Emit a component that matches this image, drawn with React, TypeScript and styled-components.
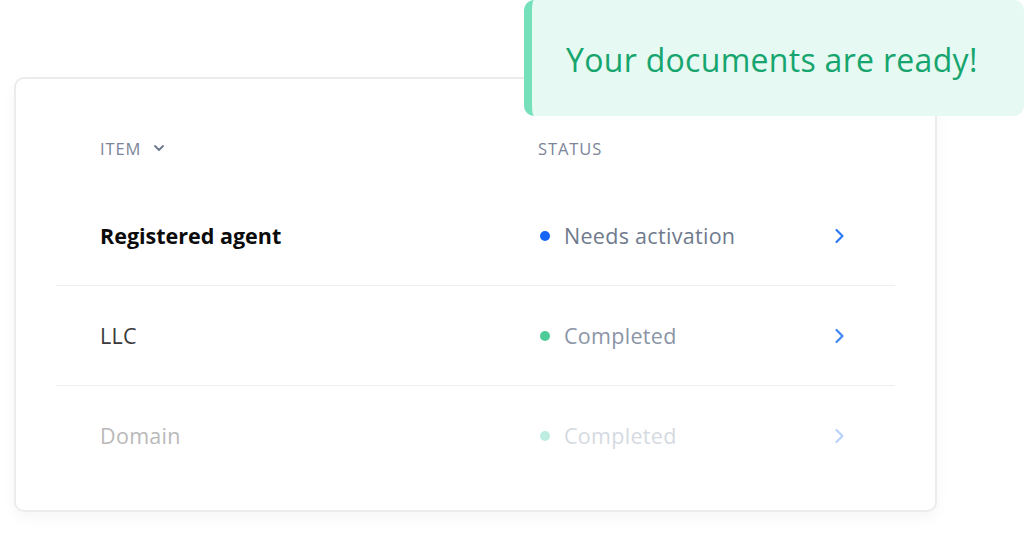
import React from 'react';
import styled, { createGlobalStyle } from 'styled-components';

const GlobalStyle = createGlobalStyle`
  html, body {
    margin: 0;
    padding: 0;
    background: #ffffff;
  }
  body {
    font-family: "Open Sans", Lato, "Liberation Sans", sans-serif;
    -webkit-font-smoothing: antialiased;
  }
`;

const Page = styled.div`
  position: relative;
  width: 1024px;
  height: 536px;
  padding: 77px 0 0 14px;
  box-sizing: border-box;
  overflow: hidden;
`;

const Card = styled.div`
  width: 923px;
  height: 435px;
  box-sizing: border-box;
  border: 2px solid #ececed;
  border-radius: 10px;
  background: #fff;
  box-shadow: 0 6px 14px rgba(0, 0, 0, 0.04);
  padding: 0 40px 25px;
`;

const HeaderRow = styled.div`
  display: flex;
  align-items: center;
  padding: 59px 0 28px 44px;
  height: 20px;
`;

const HeadCell = styled.div<{ width?: number }>`
  display: flex;
  align-items: center;
  width: ${_ => (_.width ? `${_.width}px` : 'auto')};
  font-size: 16.5px;
  letter-spacing: 0.9px;
  color: #7b8599;
  text-transform: uppercase;
`;

const Caret = styled.svg`
  margin-left: 12px;
`;

const Row = styled.div<{ last?: boolean }>`
  display: flex;
  align-items: center;
  height: 99px;
  padding-left: 44px;
  border-bottom: ${_ => (_.last ? 'none' : '1px solid #efeff1')};
`;

const ItemName = styled.div<{ tone: 'strong' | 'normal' | 'muted' }>`
  width: 438px;
  font-size: 21.5px;
  font-weight: ${_ => (_.tone === 'strong' ? 700 : 400)};
  letter-spacing: ${_ => (_.tone === 'strong' ? '0' : '0.3px')};
  color: ${_ => (_.tone === 'strong' ? '#0b0b0b' : _.tone === 'normal' ? '#3a3a3a' : '#b9b9b9')};
`;

const Status = styled.div`
  display: flex;
  align-items: center;
  width: 296px;
`;

const Dot = styled.span<{ color: string }>`
  width: 10px;
  height: 10px;
  border-radius: 50%;
  margin-left: 2px;
  margin-right: 14px;
  background: ${_ => _.color};
`;

const StatusText = styled.span<{ color: string }>`
  font-size: 21.5px;
  letter-spacing: 0.3px;
  color: ${_ => _.color};
`;

const Toast = styled.div`
  position: absolute;
  top: 0;
  left: 524px;
  width: 500px;
  height: 116px;
  box-sizing: border-box;
  display: flex;
  align-items: center;
  padding-left: 34px;
  padding-top: 2px;
  background: #e6f9f2;
  border-left: 8px solid #76e0bb;
  border-radius: 10px;
  font-size: 32px;
  color: #16a56e;
  letter-spacing: 0.3px;
`;

interface RowData {
  name: string;
  tone: 'strong' | 'normal' | 'muted';
  status: string;
  dot: string;
  text: string;
  arrow: string;
}

const rows: RowData[] = [
  { name: 'Registered agent', tone: 'strong', status: 'Needs activation', dot: '#1765f4', text: '#6f7a8d', arrow: '#2b7bf5' },
  { name: 'LLC', tone: 'normal', status: 'Completed', dot: '#4fcb99', text: '#8b95a6', arrow: '#3d86f5' },
  { name: 'Domain', tone: 'muted', status: 'Completed', dot: '#bcede0', text: '#d5dae1', arrow: '#b8d3fb' },
];

const Chevron = ({ color }: { color: string }) => (
  <svg width="12" height="18" viewBox="0 0 12 18">
    <path d="M2.5 3l6 6-6 6" fill="none" stroke={color} strokeWidth="2.2" strokeLinecap="round" strokeLinejoin="round" />
  </svg>
);

export default function App() {
  return (
    <Page>
      <GlobalStyle />
      <Card>
        <HeaderRow>
          <HeadCell width={438}>
            Item
            <Caret width="12" height="8" viewBox="0 0 12 8">
              <path d="M2 2l4 4 4-4" fill="none" stroke="#6c778b" strokeWidth="1.8" strokeLinecap="round" strokeLinejoin="round" />
            </Caret>
          </HeadCell>
          <HeadCell>Status</HeadCell>
        </HeaderRow>
        {rows.map((r, i) => (
          <Row key={r.name} last={i === rows.length - 1}>
            <ItemName tone={r.tone}>{r.name}</ItemName>
            <Status>
              <Dot color={r.dot} />
              <StatusText color={r.text}>{r.status}</StatusText>
            </Status>
            <Chevron color={r.arrow} />
          </Row>
        ))}
      </Card>
      <Toast>Your documents are ready!</Toast>
    </Page>
  );
}
